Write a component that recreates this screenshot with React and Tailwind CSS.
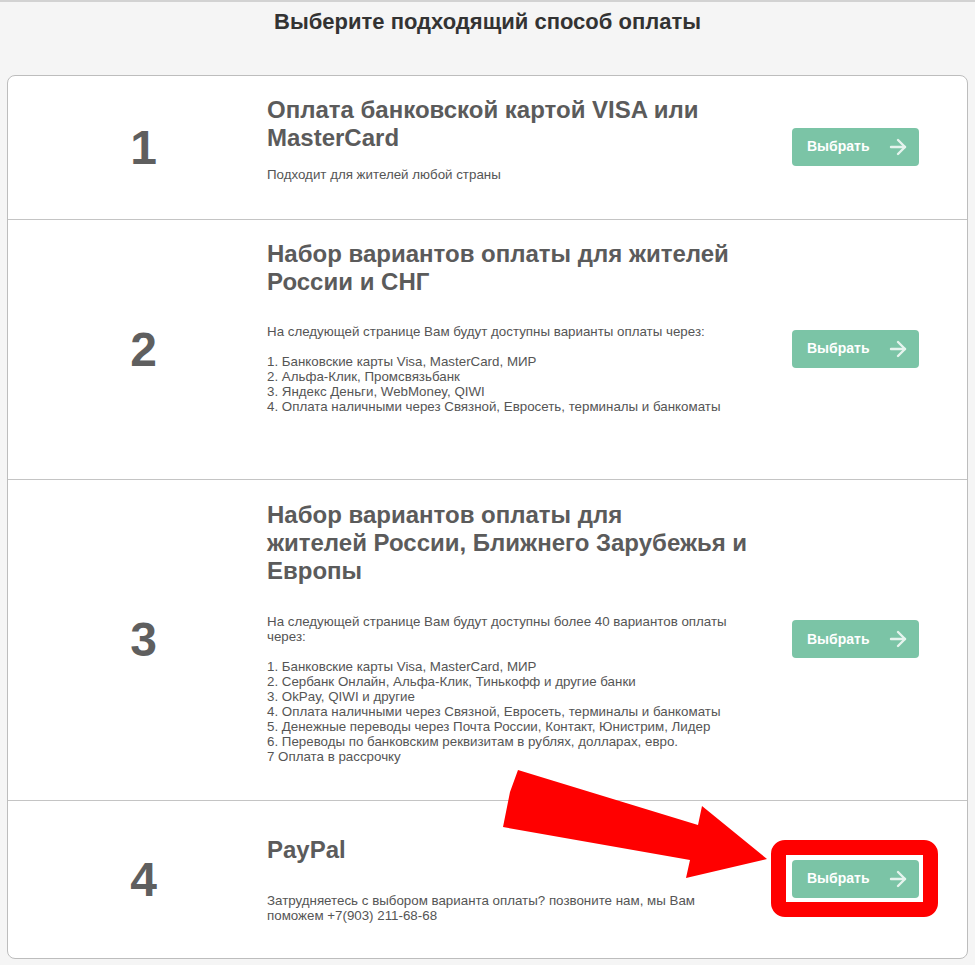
import React from 'react';
import { ArrowRight } from 'lucide-react';

const options = [
  {
    num: '1',
    title: ['Оплата банковской картой VISA или', 'MasterCard'],
    body: ['Подходит для жителей любой страны'],
    pad: 'pt-[20px] pb-[37px]',
    gap: 'mt-[15px]',
  },
  {
    num: '2',
    title: ['Набор вариантов оплаты для жителей', 'России и СНГ'],
    body: [
      'На следующей странице Вам будут доступны варианты оплаты через:',
      '',
      '1. Банковские карты Visa, MasterCard, МИР',
      '2. Альфа-Клик, Промсвязьбанк',
      '3. Яндекс Деньги, WebMoney, QIWI',
      '4. Оплата наличными через Связной, Евросеть, терминалы и банкоматы',
    ],
    pad: 'pt-[20px] pb-[65px]',
    gap: 'mt-[28px]',
  },
  {
    num: '3',
    title: ['Набор вариантов оплаты для', 'жителей России, Ближнего Зарубежья и', 'Европы'],
    body: [
      'На следующей странице Вам будут доступны более 40 вариантов оплаты',
      'через:',
      '',
      '1. Банковские карты Visa, MasterCard, МИР',
      '2. Сербанк Онлайн, Альфа-Клик, Тинькофф и другие банки',
      '3. OkPay, QIWI и другие',
      '4. Оплата наличными через Связной, Евросеть, терминалы и банкоматы',
      '5. Денежные переводы через Почта России, Контакт, Юнистрим, Лидер',
      '6. Переводы по банковским реквизитам в рублях, долларах, евро.',
      '7 Оплата в рассрочку',
    ],
    pad: 'pt-[21px] pb-[36px]',
    gap: 'mt-[29px]',
  },
  {
    num: '4',
    title: ['PayPal'],
    body: [
      'Затрудняетесь с выбором варианта оплаты? позвоните нам, мы Вам',
      'поможем +7(903) 211-68-68',
    ],
    pad: 'pt-[35px] pb-[35px]',
    gap: 'mt-[29px]',
  },
];

const OptionRow = ({ option, first }) => (
  <div className={`flex items-center ${first ? '' : 'border-t border-[#c4c4c4]'}`}>
    <div className="w-[259px] shrink-0 pl-3 text-center text-[48px] font-bold leading-none text-[#5f5f5f]">
      {option.num}
    </div>
    <div className={`w-[490px] shrink-0 ${option.pad}`}>
      <h3 className="text-[24px] font-bold leading-[28px] text-[#5b5b5b]">
        {option.title.map((line, i) => (
          <div key={i}>{line}</div>
        ))}
      </h3>
      <div className={`${option.gap} text-[13.33px] leading-[15px] text-[#555]`}>
        {option.body.map((line, i) => (
          <div key={i} className="h-[15px] whitespace-nowrap">{line}</div>
        ))}
      </div>
    </div>
    <div className="flex flex-1 justify-end pr-[48px]">
      <button className="-mt-[2px] flex h-[38px] w-[127px] items-center justify-between rounded-[4px] bg-[#7bc4a6] pl-[15px] pr-[9px] text-[14px] font-bold text-white">
        <span>Выбрать</span>
        <ArrowRight size={24} strokeWidth={2.4} className="text-[#e6f4ee]" />
      </button>
    </div>
  </div>
);

export default function App() {
  return (
    <div className="relative min-h-[965px] bg-[#f5f5f5] pb-[6px] font-['Liberation_Sans',Arial,sans-serif]">
      <div className="h-[2px] bg-[#d2d2d2]" />
      <h1 className="pt-[7px] text-center text-[22px] font-bold leading-[26px] text-[#333]">
        Выберите подходящий способ оплаты
      </h1>
      <div className="mx-[7px] mt-[40px] rounded-[8px] border border-[#bdbdbd] bg-white">
        {options.map((option, i) => (
          <OptionRow key={option.num} option={option} first={i === 0} />
        ))}
      </div>

      {/* red annotation over the last button */}
      <svg
        className="pointer-events-none absolute left-[500px] top-[765px]"
        width="270"
        height="115"
        viewBox="500 765 270 115"
      >
        <polygon
          points="518,770 510,792 503,827 690,860 686,878 767,859 702,806 698,825"
          fill="#ff0000"
        />
      </svg>
      <div className="pointer-events-none absolute left-[771px] top-[840px] h-[77px] w-[167px] rounded-[14px] border-[15px] border-[#ff0000]" />
    </div>
  );
}
